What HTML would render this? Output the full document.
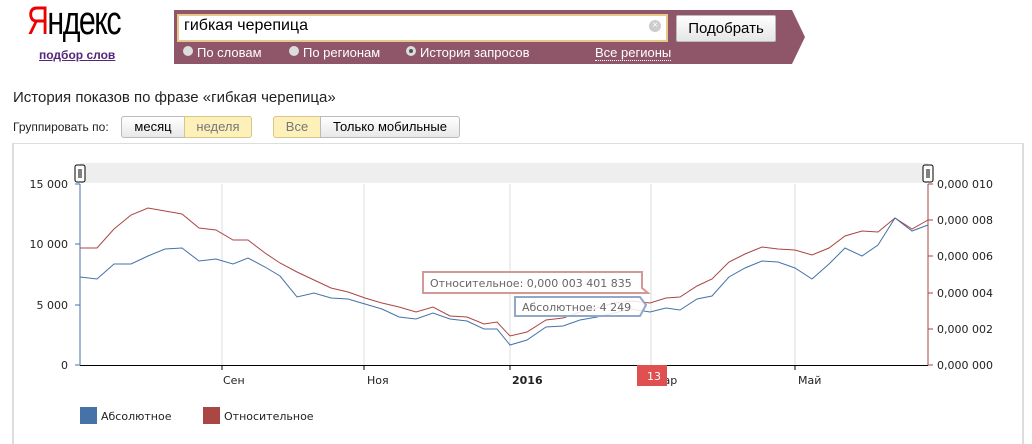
<!DOCTYPE html>
<html><head><meta charset="utf-8"><style>
body{margin:0;width:1032px;height:428px;background:#fff;font-family:"Liberation Sans",Arial,sans-serif;position:relative;overflow:hidden}
.a{position:absolute}
</style></head><body>
<div class="a" style="left:27px;top:-1px;font-size:40px;letter-spacing:-2px;transform:scaleX(0.76);transform-origin:left;color:#000;font-family:'Liberation Sans Narrow','Liberation Sans',sans-serif"><span style="color:#e00">Я</span>ндекс</div>
<div class="a" style="left:39px;top:48px;font-size:12px;font-weight:bold;color:#55267a;text-decoration:underline">подбор слов</div>
<svg class="a" style="left:174px;top:10px" width="632" height="54"><polygon points="0,0 618,0 631,27 618,54 0,54" fill="#8f5569"/></svg>
<div class="a" style="left:177px;top:14px;background:#fff;border:2px solid #e8c78a;width:487px;height:24px"></div>
<div class="a" style="left:184px;top:17px;font-size:16px;color:#000">гибкая черепица</div>
<div class="a" style="left:649px;top:20px;width:12px;height:12px;border-radius:50%;background:#ccc;color:#fff;font-size:10px;line-height:12px;text-align:center">×</div>
<div class="a" style="left:676px;top:15px;width:98px;height:25px;background:linear-gradient(#fff,#e6e6e6);border:1px solid #bbb;border-radius:2px;font-size:15px;line-height:25px;text-align:center">Подобрать</div>
<div class="a" style="left:183px;top:45px;font-size:13px;color:#fff;white-space:nowrap">
<span class="a" style="left:0;top:1px;width:10px;height:10px;border-radius:50%;background:#ddd"></span><span class="a" style="left:14px;top:0">По словам</span>
<span class="a" style="left:106px;top:1px;width:10px;height:10px;border-radius:50%;background:#ddd"></span><span class="a" style="left:120px;top:0">По регионам</span>
<span class="a" style="left:223px;top:1px;width:10px;height:10px;border-radius:50%;background:#555;box-shadow:inset 0 0 0 3px #ddd"></span><span class="a" style="left:237px;top:0">История запросов</span>
<span class="a" style="left:412px;top:0;border-bottom:1px dotted #fff">Все регионы</span></div>
<div class="a" style="left:13px;top:89px;font-size:15px;color:#222">История показов по фразе «гибкая черепица»</div>
<div class="a" style="left:13px;top:120px;font-size:12px;color:#222">Группировать по:</div>
<div class="a" style="left:121px;top:116px;width:62px;height:20px;border:1px solid #bbb;border-radius:3px 0 0 3px;background:linear-gradient(#fff,#e8e8e8);font-size:13px;line-height:20px;text-align:center">месяц</div>
<div class="a" style="left:184px;top:116px;width:66px;height:20px;border:1px solid #d8c58a;border-radius:0 3px 3px 0;background:#fdf0b8;font-size:13px;line-height:20px;text-align:center;color:#777">неделя</div>
<div class="a" style="left:273px;top:116px;width:46px;height:20px;border:1px solid #d8c58a;border-radius:3px 0 0 3px;background:#fdf0b8;font-size:13px;line-height:20px;text-align:center;color:#777">Все</div>
<div class="a" style="left:320px;top:116px;width:138px;height:20px;border:1px solid #bbb;border-radius:0 3px 3px 0;background:linear-gradient(#fff,#e8e8e8);font-size:13px;line-height:20px;text-align:center">Только мобильные</div>
<div class="a" style="left:12px;top:143px;width:1008px;height:300px;border:1px solid #ddd;border-width:1px 2px 0 2px"></div>
<svg class="a" style="left:0;top:0" width="1032" height="428" font-family="DejaVu Sans,sans-serif" font-size="11">
<rect x="80" y="163" width="848" height="20" fill="#eee"/>
<g stroke="#ddd"><line x1="222" y1="184" x2="222" y2="365"/><line x1="364" y1="184" x2="364" y2="365"/><line x1="510" y1="184" x2="510" y2="365"/><line x1="651" y1="184" x2="651" y2="365"/><line x1="795" y1="184" x2="795" y2="365"/></g>
<line x1="80" y1="184" x2="80" y2="365" stroke="#4572a7"/>
<line x1="928" y1="184" x2="928" y2="365" stroke="#aa4643"/>
<line x1="80" y1="365.5" x2="928" y2="365.5" stroke="#000"/>
<g stroke="#000"><line x1="222" y1="365" x2="222" y2="370"/><line x1="364" y1="365" x2="364" y2="370"/><line x1="510" y1="365" x2="510" y2="370"/><line x1="651" y1="365" x2="651" y2="370"/><line x1="795" y1="365" x2="795" y2="370"/></g>
<g stroke="#4572a7"><line x1="75" y1="184" x2="80" y2="184"/><line x1="75" y1="244" x2="80" y2="244"/><line x1="75" y1="305" x2="80" y2="305"/><line x1="75" y1="365" x2="80" y2="365"/></g>
<g stroke="#aa4643"><line x1="928" y1="184" x2="933" y2="184"/><line x1="928" y1="220" x2="933" y2="220"/><line x1="928" y1="256" x2="933" y2="256"/><line x1="928" y1="293" x2="933" y2="293"/><line x1="928" y1="329" x2="933" y2="329"/><line x1="928" y1="365" x2="933" y2="365"/></g>
<g fill="#222" text-anchor="end"><text x="68" y="188">15 000</text><text x="68" y="248">10 000</text><text x="68" y="309">5 000</text><text x="68" y="369">0</text></g>
<g fill="#222"><text x="937" y="188">0,000 010</text><text x="937" y="224">0,000 008</text><text x="937" y="260">0,000 006</text><text x="937" y="297">0,000 004</text><text x="937" y="333">0,000 002</text><text x="937" y="369">0,000 000</text></g>
<g fill="#222"><text x="223" y="384">Сен</text><text x="367" y="384">Ноя</text><text x="512" y="384" font-weight="bold">2016</text><text x="654" y="384">Мар</text><text x="798" y="384">Май</text></g>
<rect x="637" y="365" width="30" height="21" fill="#e05050"/><text x="647" y="380" fill="#fff">13</text>
<polyline fill="none" stroke="#aa4643" points="80,248 97,248 114,229 131,215 148,208 165,211 182,214 199,228 216,230 233,240 248,240 265,253 280,263 297,272 314,280 331,288 348,292 365,298 382,303 399,307 416,312 433,307 450,316 467,317 484,324 497,322 510,336 527,332 546,320 563,318 580,312 597,308 614,303 631,301 650,303 666,298 680,297 697,286 712,279 729,262 745,254 762,247 778,249 795,250 812,255 829,248 845,236 862,231 878,232 895,218 912,229 928,220"/>
<polyline fill="none" stroke="#4572a7" points="80,277 97,279 114,264 131,264 148,256 165,249 182,248 199,261 216,259 233,264 248,258 265,267 280,276 297,297 314,293 331,298 348,299 365,304 382,309 399,317 416,319 433,313 450,319 467,321 484,329 497,329 510,345 527,340 546,327 563,326 580,320 597,317 614,313 631,309 650,312 666,308 680,310 697,299 712,296 729,277 745,268 762,261 778,262 795,268 812,279 829,264 845,248 862,256 878,245 895,218 912,231 928,225"/>
<rect x="75" y="165" width="10" height="17" rx="2" fill="#fff" stroke="#000"/><line x1="79" y1="169" x2="79" y2="178" stroke="#000"/><line x1="81" y1="169" x2="81" y2="178" stroke="#000"/>
<rect x="923" y="165" width="10" height="17" rx="2" fill="#fff" stroke="#000"/><line x1="927" y1="169" x2="927" y2="178" stroke="#000"/><line x1="929" y1="169" x2="929" y2="178" stroke="#000"/>
<path d="M423,272 H642 V288 L648,293 H423 Z" fill="rgba(255,255,255,0.85)" stroke="#d49896" stroke-width="2"/>
<text x="430" y="287" fill="#666">Относительное: 0,000 003 401 835</text>
<path d="M515,297 H640 L646,305 L640,316 H515 Z" fill="rgba(255,255,255,0.85)" stroke="#92a8c8" stroke-width="2"/>
<text x="522" y="311" fill="#666">Абсолютное: 4 249</text>
<rect x="80" y="407" width="17" height="17" fill="#4572a7"/><text x="101" y="420" fill="#222">Абсолютное</text>
<rect x="203" y="407" width="17" height="17" fill="#aa4643"/><text x="224" y="420" fill="#222">Относительное</text>
</svg>
</body></html>
